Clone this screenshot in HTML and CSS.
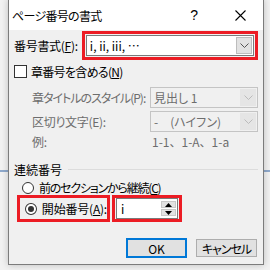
FILE: index.html
```html
<!DOCTYPE html>
<html lang="ja">

<head>
    <meta charset="UTF-8">
    <title>ページ番号の書式</title>
    <link rel="stylesheet" href="styles.css">
</head>

<body>
    <div class="dialog">
        <div class="titlebar">
            <span class="title">ページ番号の書式</span>
            <span class="help">?</span>
            <span class="close">
                <svg width="11" height="11" viewBox="0 0 11 11">
                    <path d="M0.5 0.5 L10.5 10.5 M10.5 0.5 L0.5 10.5" stroke="#000" stroke-width="1.1" fill="none"/>
                </svg>
            </span>
        </div>

        <div class="content">
            <div class="row format-row">
                <span class="label">番号書式(<u>F</u>):</span>
                <div class="mark mark-format">
                    <div class="select">
                        <span class="select-text">i, ii, iii, …</span>
                        <span class="select-btn">
                            <svg width="9" height="5" viewBox="0 0 9 5"><path d="M0.5 0.5 L4.5 4.5 L8.5 0.5" stroke="#555" fill="none"/></svg>
                        </span>
                    </div>
                </div>
            </div>

            <div class="row check-row">
                <span class="checkbox"></span>
                <span class="check-text">章番号を含める(<u>N</u>)</span>
            </div>

            <div class="sub">
                <div class="row sub-row first">
                    <span class="sub-label style-label">章タイトルのスタイル(P):</span>
                    <div class="select disabled">
                        <span class="select-text">見出し 1</span>
                        <span class="select-btn">
                            <svg width="9" height="5" viewBox="0 0 9 5"><path d="M0.5 0.5 L4.5 4.5 L8.5 0.5" stroke="#bbb" fill="none"/></svg>
                        </span>
                    </div>
                </div>
                <div class="row sub-row">
                    <span class="sub-label">区切り文字(E):</span>
                    <div class="select disabled">
                        <span class="select-text">-　(ハイフン)</span>
                        <span class="select-btn">
                            <svg width="9" height="5" viewBox="0 0 9 5"><path d="M0.5 0.5 L4.5 4.5 L8.5 0.5" stroke="#bbb" fill="none"/></svg>
                        </span>
                    </div>
                </div>
                <div class="row example-row">
                    <span class="sub-label">例:</span>
                    <span class="example">1-1、1-A、1-a</span>
                </div>
            </div>

            <div class="group-title">
                <span>連続番号</span>
                <span class="rule"></span>
            </div>

            <div class="row radio-row">
                <span class="radio"></span>
                <span class="continue-text">前のセクションから継続(<u>C</u>)</span>
            </div>

            <div class="row start-row">
                <div class="mark mark-start">
                    <span class="radio checked"></span>
                    <span>開始番号(<u>A</u>):</span>
                </div>
                <div class="mark mark-spin">
                    <div class="spin">
                        <span class="spin-text">i</span>
                        <span class="spin-btns">
                            <span class="spin-btn">
                                <svg width="7" height="4" viewBox="0 0 7 4"><path d="M3.5 0 L7 4 L0 4 Z" fill="#000"/></svg>
                            </span>
                            <span class="spin-btn">
                                <svg width="7" height="4" viewBox="0 0 7 4"><path d="M0 0 L7 0 L3.5 4 Z" fill="#000"/></svg>
                            </span>
                        </span>
                    </div>
                </div>
            </div>

            <div class="buttons">
                <button class="btn default">OK</button>
                <button class="btn cancel">キャンセル</button>
            </div>
        </div>
    </div>
</body>

</html>
```

FILE: styles.css
```css
body {
    margin: 0;
    padding: 0;
    height: 270px;
    overflow: hidden;
    background: linear-gradient(#8fa9cc, #8fa9cc) 0 170px / 100% 2px no-repeat, #f2f2f2;
    font-family: "Noto Sans CJK JP", "Noto Sans", sans-serif;
    font-size: 12px;
    font-feature-settings: "palt";
    color: #000;
    white-space: nowrap;
}

u {
    text-decoration: underline;
    text-underline-offset: 1px;
}

.dialog {
    margin: -1px 0 0 8px;
    width: 254px;
    height: 264px;
    border: 1px solid #7c7c7c;
    background: #f0f0f0;
    box-shadow: 0 0 7px rgba(0, 0, 0, 0.22);
}

.titlebar {
    height: 30px;
    background: #fff;
    display: flex;
    align-items: center;
}

.title {
    margin-left: 3px;
    font-size: 12px;
    letter-spacing: -0.7px;
}

.help {
    margin-left: auto;
    font-family: "Liberation Sans", sans-serif;
    font-size: 14px;
}

.close {
    display: flex;
    margin: 0 17px 0 37px;
}

.content {
    padding: 0 5px 0 5px;
}

.row {
    display: flex;
    align-items: center;
}

.mark {
    border: 3px solid #ec1c24;
    box-sizing: border-box;
    display: flex;
    align-items: center;
}

.format-row {
    margin-top: 1px;
    height: 29px;
}

.format-row .label {
    width: 69px;
    letter-spacing: -0.3px;
}

.mark-format {
    width: 179px;
    height: 29px;
    padding: 0 1px;
}

.select {
    display: flex;
    align-items: center;
    box-sizing: border-box;
    height: 21px;
    border: 1px solid #7a7a7a;
    background: #fff;
    flex: 1;
}

.select-text {
    flex: 1;
    padding-left: 3px;
}

.select-btn {
    width: 16px;
    height: 17px;
    margin-right: 1px;
    background: #e2e2e2;
    border: 1px solid #bdbdbd;
    box-sizing: border-box;
    display: flex;
    align-items: center;
    justify-content: center;
}

.select.disabled {
    background: #f0f0f0;
    border-color: #c4c4c4;
    color: #6d6d6d;
    width: 108px;
    flex: none;
}

.select.disabled .select-btn {
    background: #e5e5e5;
    border-color: #e5e5e5;
}

.check-row {
    margin-top: 3px;
    height: 16px;
}

.check-text {
    letter-spacing: -0.7px;
}

.checkbox {
    width: 13px;
    height: 13px;
    box-sizing: border-box;
    border: 1px solid #333;
    background: #fff;
    margin-right: 4px;
}

.sub {
    padding-left: 18px;
    color: #6d6d6d;
}

.sub-row {
    height: 21px;
    margin-top: 3px;
    justify-content: space-between;
}

.sub-row.first {
    margin-top: 8px;
}

.sub-label {
    width: 118px;
    letter-spacing: -0.3px;
}

.sub-label.style-label {
    letter-spacing: -1px;
}

.example-row {
    height: 17px;
    margin-top: 1px;
}

.example {
    padding-left: 2px;
    font-feature-settings: normal;
}

.group-title {
    display: flex;
    align-items: center;
    height: 18px;
    margin-top: 10px;
}

.rule {
    flex: 1;
    height: 1px;
    background: #dcdcdc;
    margin-left: 6px;
}

.radio-row {
    margin-top: 2px;
    height: 15px;
    padding-left: 8px;
}

.continue-text {
    letter-spacing: -1.2px;
}

.radio {
    width: 12px;
    height: 12px;
    box-sizing: border-box;
    border: 1px solid #333;
    border-radius: 50%;
    background: #fff;
    margin-right: 5px;
    display: flex;
    align-items: center;
    justify-content: center;
}

.radio.checked::after {
    content: "";
    width: 6px;
    height: 6px;
    border-radius: 50%;
    background: #333;
}

.start-row {
    height: 27px;
}

.mark-start {
    margin-left: 3px;
    width: 93px;
    height: 27px;
    padding-left: 5px;
    letter-spacing: -0.2px;
}

.mark-spin {
    margin-left: 2px;
    width: 70px;
    height: 27px;
    padding: 0 1px;
}

.spin {
    flex: 1;
    height: 21px;
    box-sizing: border-box;
    border: 1px solid #7a7a7a;
    background: #fff;
    display: flex;
    align-items: center;
}

.spin-text {
    flex: 1;
    padding-left: 4px;
}

.spin-btns {
    display: flex;
    flex-direction: column;
    gap: 1px;
    margin-right: 1px;
}

.spin-btn {
    width: 15px;
    height: 7px;
    background: #e2e2e2;
    border: 1px solid #c8c8c8;
    box-sizing: border-box;
    display: flex;
    align-items: center;
    justify-content: center;
}

.buttons {
    display: flex;
    justify-content: flex-end;
    align-items: center;
    gap: 9px;
    margin-top: 16px;
    padding-right: 1px;
}

.btn {
    font-family: inherit;
    font-size: 12px;
    font-feature-settings: "palt";
    white-space: nowrap;
    height: 18px;
    width: 61px;
    padding: 0;
    border: 1px solid #adadad;
    background: #e1e1e1;
    color: #000;
}

.btn.cancel {
    letter-spacing: -1px;
}

.btn.default {
    height: 20px;
    border: 2px solid #0078d7;
}
```
